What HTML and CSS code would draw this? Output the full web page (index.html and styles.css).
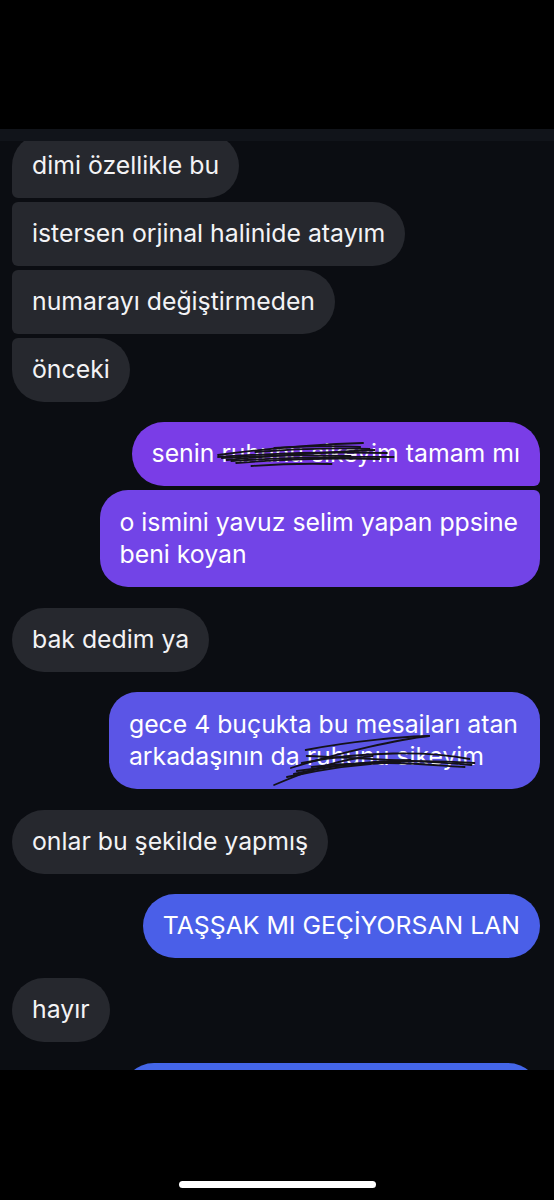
FILE: index.html
```html
<!DOCTYPE html>
<html lang="tr">
<head>
<meta charset="utf-8">
<title>Chat</title>
<link rel="stylesheet" href="styles.css">
</head>
<body>
<div class="screen">
  <div class="top"></div>
  <div class="band"></div>
  <div class="chat">
    <div class="group recv first-group">
      <div class="bubble in g-first">dimi özellikle bu</div>
      <div class="bubble in g-mid">istersen orjinal halinide atayım</div>
      <div class="bubble in g-mid">numarayı değiştirmeden</div>
      <div class="bubble in g-last">önceki</div>
    </div>
    <div class="group sent">
      <div class="bubble out s-first c1">senin <span class="scrib">ruhunu sikeyim<svg class="scribble s1" viewBox="0 0 190 32" preserveAspectRatio="none"><path d="M1 14 Q80 4 153 2"/><path d="M1 16 Q90 10 178 12"/><path d="M10 19 Q90 12 165 9"/><path d="M20 22 Q100 16 170 18"/><path d="M36 25 Q80 22 120 23"/><path d="M60 7 Q110 4 150 6"/><path d="M5 17 Q70 13 140 15"/><path d="M40 11 Q100 6 160 8"/><path d="M15 20 Q90 15 185 16"/></svg></span> tamam mı</div>
      <div class="bubble out s-last c2 two">o ismini yavuz selim yapan ppsine<br>beni koyan</div>
    </div>
    <div class="group recv">
      <div class="bubble in">bak dedim ya</div>
    </div>
    <div class="group sent">
      <div class="bubble out c3 two">gece 4 buçukta bu mesajları atan<br>arkadaşının da <span class="scrib">ruhunu sikeyim<svg class="scribble s2" viewBox="0 0 200 40" preserveAspectRatio="none"><path d="M9 21 C60 5 120 -8 149 -11"/><path d="M24 3 C70 -6 130 -11 149 -11"/><path d="M25 9 C90 12 150 14 192 18"/><path d="M-8 38 C30 22 60 12 92 9"/><path d="M20 16 C80 4 150 4 190 12"/><path d="M15 24 C80 14 140 12 195 16"/><path d="M30 20 C100 12 150 18 185 20"/><path d="M12 27 C60 16 100 14 130 13"/><path d="M5 30 C50 20 90 16 120 15"/></svg></span></div>
    </div>
    <div class="group recv">
      <div class="bubble in">onlar bu şekilde yapmış</div>
    </div>
    <div class="group sent">
      <div class="bubble out c4">TAŞŞAK MI GEÇİYORSAN LAN</div>
    </div>
    <div class="group recv">
      <div class="bubble in">hayır</div>
    </div>
    <div class="group sent">
      <div class="bubble out c5 cut">&nbsp;</div>
    </div>
  </div>
  <div class="bottom"><div class="home"></div></div>
</div>
</body>
</html>
```

FILE: styles.css
```css
html, body {
  margin: 0;
  padding: 0;
  background: #000;
}

.screen {
  width: 554px;
  height: 1200px;
  display: flex;
  flex-direction: column;
  background: #000;
  font-family: Inter, "Noto Sans", "Liberation Sans", sans-serif;
  overflow: hidden;
}

.top {
  height: 129px;
  background: #000;
  flex: none;
}

.band {
  height: 12px;
  background: #11141a;
  flex: none;
}

.chat {
  height: 929px;
  flex: none;
  background: #0b0d12;
  overflow: hidden;
  display: flex;
  flex-direction: column;
  gap: 20.4px;
  padding: 0 14px 0 12px;
}

.first-group {
  margin-top: -7px;
}

.group {
  display: flex;
  flex-direction: column;
  gap: 4px;
}

.group.recv {
  align-items: flex-start;
}

.group.sent {
  align-items: flex-end;
}

.bubble {
  font-size: 24.8px;
  line-height: 32px;
  padding: 15px 20px 17px;
  border-radius: 32px;
  color: #f3f3f5;
  white-space: nowrap;
}

.bubble.two {
  padding: 15.5px 22px 17.5px 20px;
  border-radius: 28px;
}

.in {
  background: #26282e;
}

.in.g-first {
  border-bottom-left-radius: 6px;
}

.in.g-mid {
  border-top-left-radius: 6px;
  border-bottom-left-radius: 6px;
}

.in.g-last {
  border-top-left-radius: 6px;
}

.out {
  color: #ffffff;
}

.out.s-first {
  border-bottom-right-radius: 6px;
}

.out.s-last {
  border-top-right-radius: 6px;
}

.c1 { background: #7a3de7; }
.c2 { background: #7244e7; }
.c3 { background: #5b55e6; }
.c4 { background: #4a5fe8; }
.c5 { background: #4466e8; }

.cut {
  width: 378px;
}

.scrib {
  position: relative;
}

.scribble {
  position: absolute;
  overflow: visible;
  fill: none;
  stroke: #141219;
  stroke-width: 1.8;
  stroke-linecap: round;
}

.scribble.s1 {
  left: -4px;
  top: 3px;
  width: calc(100% + 4px);
  height: 32px;
}

.scribble.s2 {
  left: -25px;
  top: 6px;
  width: calc(100% + 20px);
  height: 40px;
}

.bottom {
  flex: 1;
  background: #000;
  display: flex;
  justify-content: center;
  align-items: flex-end;
  padding-bottom: 12px;
}

.home {
  width: 197px;
  height: 7px;
  border-radius: 4px;
  background: #fff;
}
```
